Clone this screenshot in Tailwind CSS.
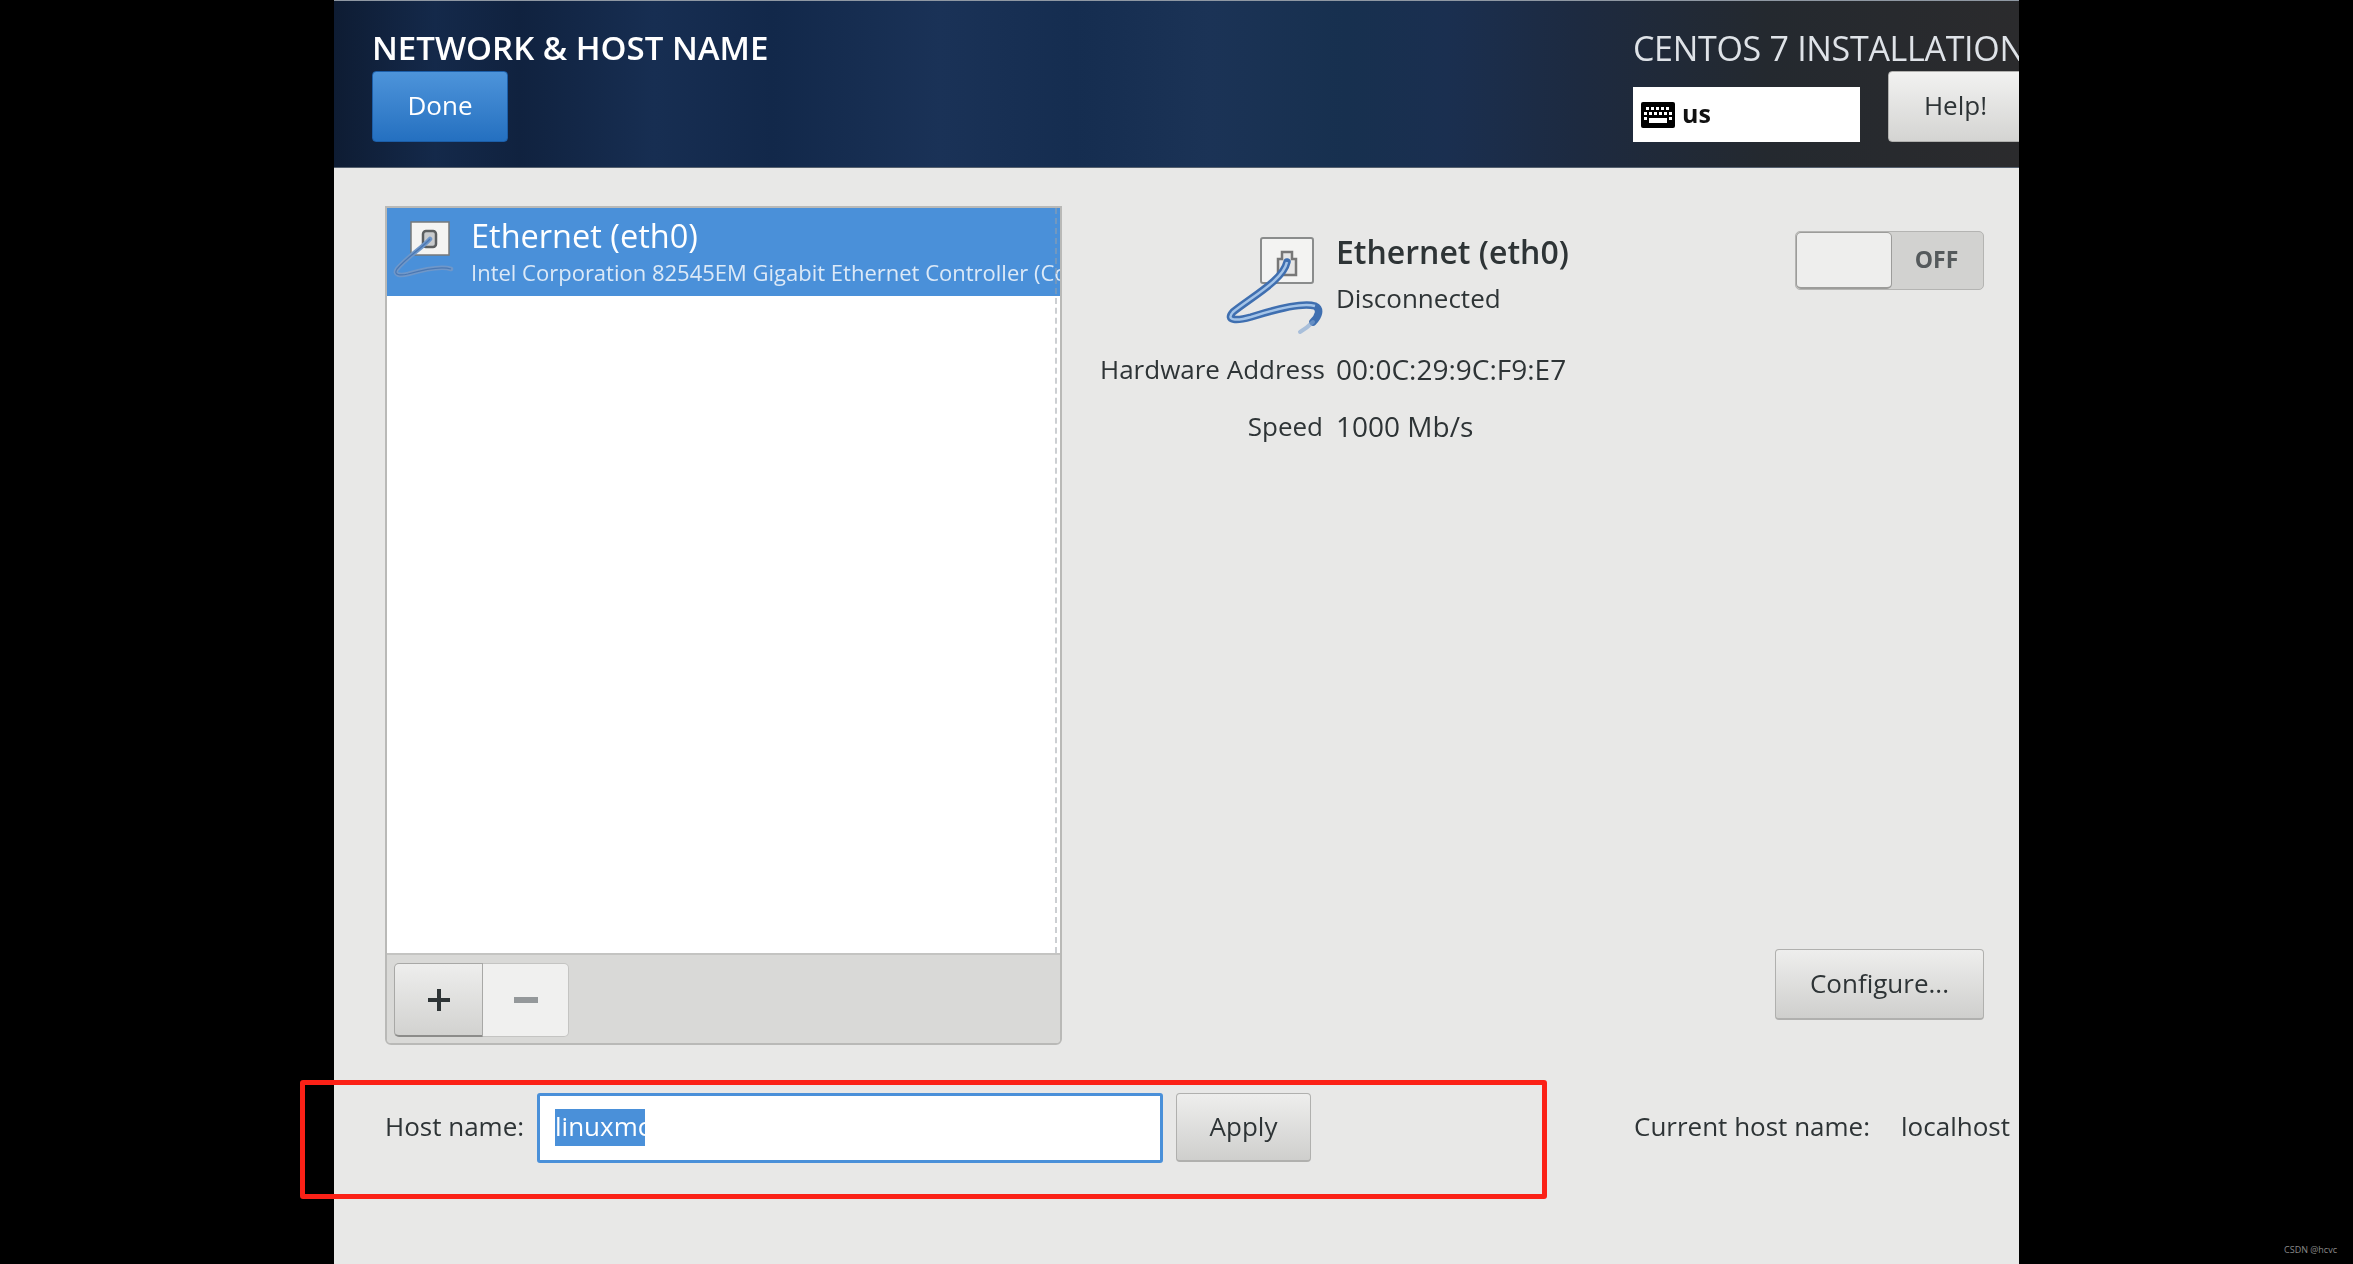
<!DOCTYPE html>
<html lang="en">
<head>
    <meta charset="UTF-8">
    <title>Network &amp; Host Name</title>
    <script src="https://cdn.jsdelivr.net/npm/@tailwindcss/browser@4"></script>
</head>
<body class="bg-black h-screen overflow-hidden font-['Open_Sans',sans-serif] text-[#2e3436] relative">
    <div class="ml-[334px] w-[1685px] h-[1264px] bg-[#e8e8e7] flex flex-col blur-[0.7px] overflow-hidden">

        <!-- header -->
        <div class="h-[168px] shrink-0 flex justify-between pl-[38px] border-t border-t-[#8f98a3] border-b border-b-[#55606e] bg-[linear-gradient(90deg,#0e1c33_0%,#14294a_6%,#10223f_11%,#172e52_19%,#12284a_26%,#1a3257_36%,#152d50_44%,#1b3356_52%,#17304f_60%,#1a2f50_66%,#1d2a40_74%,#24292f_85%,#2b2b2d_100%)]">
            <div class="pt-[28px]">
                <div class="h-[38px] text-[33px] leading-[38px] text-white font-semibold tracking-[0px] whitespace-nowrap">NETWORK &amp; HOST NAME</div>
                <div class="mt-[4px] w-[136px] h-[71px] rounded-[4px] border border-[#1c5ea8] bg-gradient-to-b from-[#4d94da] to-[#2470c0] text-white text-[26px] flex items-center justify-center pb-[3px]">Done</div>
            </div>
            <div class="pt-[28px] w-[386px] shrink-0">
                <div class="h-[38px] text-[34px] leading-[38px] text-[#dfe3e8] tracking-[-0.3px] whitespace-nowrap">CENTOS 7 INSTALLATION</div>
                <div class="mt-[4px] flex items-end gap-[28px]">
                    <div class="w-[227px] h-[55px] shrink-0 bg-white flex items-center pl-[8px] gap-[7px]">
                        <svg width="34" height="26" viewBox="0 0 34 26">
                            <rect width="34" height="26" rx="2" fill="#000"/>
                            <g fill="#fff">
                                <rect x="5" y="5" width="3" height="3"/><rect x="10" y="5" width="3" height="3"/><rect x="15" y="5" width="3" height="3"/><rect x="20" y="5" width="3" height="3"/><rect x="25" y="5" width="3" height="3"/>
                                <rect x="3" y="10" width="3" height="3"/><rect x="8" y="10" width="3" height="3"/><rect x="13" y="10" width="3" height="3"/><rect x="18" y="10" width="3" height="3"/><rect x="23" y="10" width="3" height="3"/><rect x="28" y="10" width="3" height="3"/>
                                <rect x="3" y="15" width="3" height="3"/><rect x="28" y="15" width="3" height="3"/>
                                <rect x="8" y="16" width="18" height="5"/>
                            </g>
                        </svg>
                        <span class="text-[25px] font-bold text-[#111] pb-[2px]">us</span>
                    </div>
                    <div class="w-[135px] h-[71px] shrink-0 rounded-l-[4px] border border-[#b0b0ae] bg-gradient-to-b from-[#f2f2f1] to-[#d4d4d2] text-[26px] flex items-center justify-center pb-[3px]">Help!</div>
                </div>
            </div>
        </div>

        <!-- body -->
        <div class="pt-[38px] pl-[51px] pr-[35px]">
            <div class="h-[839px] flex">

                <!-- device list -->
                <div class="w-[677px] shrink-0 flex flex-col border-2 border-[#b9b9b7] rounded-b-[6px] overflow-hidden">
                    <div class="flex-1 bg-white relative">
                        <div class="h-[88px] bg-[#4a90d9] flex text-white overflow-hidden">
                            <svg class="shrink-0 ml-[5px] mt-[8px]" width="70" height="70" viewBox="0 0 70 70">
                                <rect x="19" y="6" width="38" height="33" fill="#f4f4f2" stroke="#77797a" stroke-width="1.5"/>
                                <rect x="31" y="15" width="13" height="16" rx="3" fill="#c9cbcc" stroke="#5c5f60" stroke-width="2.5"/>
                                <path d="M38 23 C30 32 14 42 5 53 C1 59 8 60 16 58 C30 54 50 50 59 53" fill="none" stroke="#6f97c9" stroke-width="4.5" stroke-linecap="round"/>
                                <path d="M38 23 C30 32 14 42 5 53 C1 59 8 60 16 58 C30 54 50 50 59 53" fill="none" stroke="#3a6aa8" stroke-width="1.2" opacity="0.7"/>
                            </svg>
                            <div class="ml-[9px] whitespace-nowrap">
                                <div class="text-[32.5px] leading-[36px] mt-[10px]">Ethernet (eth0)</div>
                                <div class="text-[22px] leading-[28px] mt-[4px] text-[#dce9f7]">Intel Corporation 82545EM Gigabit Ethernet Controller (Co</div>
                            </div>
                        </div>
                        <div class="absolute top-0 bottom-0 right-[3px] border-r-2 border-dashed border-[#9aa0a6]/50"></div>
                    </div>
                    <div class="h-[90px] shrink-0 bg-[#d9d9d7] border-t-2 border-[#c4c4c2] flex pl-[7px] pt-[8px]">
                        <div class="w-[89px] h-[74px] rounded-l-[5px] border border-[#a8a8a6] border-b-2 border-b-[#8c8c8a] bg-gradient-to-b from-[#eeeeed] to-[#d2d2d0] flex items-center justify-center">
                            <svg width="24" height="24" viewBox="0 0 24 24"><path d="M12 1V23M1 12H23" stroke="#2e3436" stroke-width="4"/></svg>
                        </div>
                        <div class="w-[86px] h-[74px] rounded-r-[5px] border border-l-0 border-[#c4c4c2] bg-[#f0f0ef] flex items-center justify-center">
                            <svg width="24" height="8" viewBox="0 0 24 8"><rect width="24" height="6" y="1" fill="#94989a"/></svg>
                        </div>
                    </div>
                </div>

                <!-- device details -->
                <div class="flex-1 flex flex-col justify-between">
                    <div class="flex justify-between pt-[25px]">
                        <div class="ml-[38px] mt-[3px] grid grid-cols-[223px_auto] grid-rows-[36px_46px_71px_57px] gap-x-[13px] items-end">
                            <div class="row-span-2 self-start flex justify-end h-[82px]">
                                <svg class="overflow-visible" width="100" height="82" viewBox="0 0 100 82">
                                    <rect x="38" y="4" width="52" height="45" rx="2" fill="#f3f3f2" stroke="#8a8c8c" stroke-width="2"/>
                                    <path d="M55 41V25H59V18H69V25H73V41Z" fill="#e6e6e6" stroke="#777" stroke-width="2.5"/>
                                    <path d="M64 28 C60 46 30 62 10 78 C2 87 14 87 28 83 C50 76 78 68 92 72 C98 75 96 82 90 88" fill="none" stroke="#3f6fb0" stroke-width="7.5" stroke-linecap="round"/>
                                    <path d="M90 88 C86 92 82 95 77 98" fill="none" stroke="#7fa4d2" stroke-width="4" stroke-linecap="round" opacity="0.6"/>
                                    <path d="M64 28 C60 46 30 62 10 78 C2 87 14 87 28 83 C50 76 78 68 92 72" fill="none" stroke="#a4c4e8" stroke-width="2.5"/>
                                </svg>
                            </div>
                            <div class="text-[32px] leading-[36px] font-semibold whitespace-nowrap">Ethernet (eth0)</div>
                            <div class="text-[26px] leading-[36px] whitespace-nowrap">Disconnected</div>
                            <div class="text-[26px] leading-[36px] text-right whitespace-nowrap">Hardware Address</div>
                            <div class="text-[28px] leading-[36px] whitespace-nowrap">00:0C:29:9C:F9:E7</div>
                            <div class="text-[26px] leading-[36px] text-right whitespace-nowrap">Speed</div>
                            <div class="text-[28px] leading-[36px] whitespace-nowrap">1000 Mb/s</div>
                        </div>
                        <div class="w-[189px] h-[59px] rounded-[5px] border border-[#b4b4b2] bg-[#d2d2d0] flex">
                            <div class="w-[96px] h-full rounded-[5px] border border-[#9c9c9a] border-b-2 bg-[#eeeeed]"></div>
                            <div class="flex-1 flex items-center justify-center text-[23px] font-bold text-[#555a5c] pb-[3px] pr-[2px]">OFF</div>
                        </div>
                    </div>
                    <div class="flex justify-end mb-[25px]">
                        <div class="w-[209px] h-[71px] rounded-[4px] border border-[#b0b0ae] border-b-2 bg-gradient-to-b from-[#eeeeed] to-[#cfcfcd] text-[26px] flex items-center justify-center pb-[2px]">Configure...</div>
                    </div>
                </div>
            </div>

            <!-- host name -->
            <div class="mt-[48px] h-[69px] flex items-center text-[26px]">
                <div class="w-[152px] shrink-0 whitespace-nowrap pb-[2px]">Host name:</div>
                <div class="w-[626px] h-[70px] shrink-0 rounded-[3px] border-[3px] border-[#4a90d9] bg-white flex items-center pl-[15px]">
                    <span class="bg-[#4a90d9] text-white h-[37px] leading-[34px] w-[90px] overflow-hidden">linuxmc</span>
                </div>
                <div class="ml-[13px] w-[135px] h-[69px] shrink-0 rounded-[4px] border border-[#b0b0ae] border-b-2 bg-gradient-to-b from-[#eeeeed] to-[#cfcfcd] flex items-center justify-center pb-[2px]">Apply</div>
                <div class="ml-[323px] whitespace-nowrap pb-[2px]">Current host name:</div>
                <div class="ml-[31px] whitespace-nowrap pb-[2px]">localhost</div>
            </div>
        </div>
    </div>

    <!-- red annotation box -->
    <div class="absolute left-[300px] top-[1080px] w-[1247px] h-[119px] border-[5px] border-[#fb2117] rounded-[3px]"></div>
    <div class="absolute right-[16px] top-[1243px] text-[9px] text-[#8a8a8a]">CSDN @hcvc</div>
</body>
</html>
